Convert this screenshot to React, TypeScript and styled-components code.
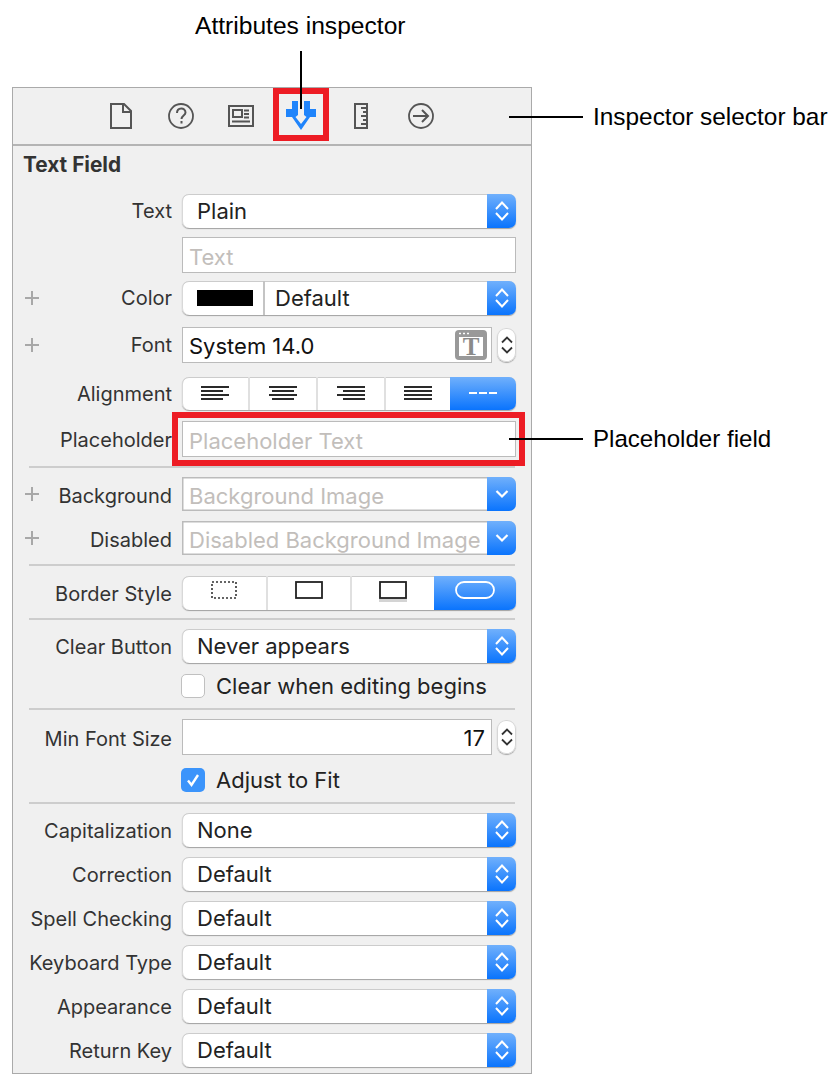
import React from 'react'
import styled, { createGlobalStyle } from 'styled-components'

const GlobalStyle = createGlobalStyle`
  html, body {
    margin: 0;
    padding: 0;
    background: #fff;
  }
`

const Page = styled.div`
  position: relative;
  width: 839px;
  height: 1085px;
  overflow: hidden;
  background: #fff;
  font-family: Inter, 'Liberation Sans', sans-serif;
`

const TopCaption = styled.div`
  height: 87px;
  box-sizing: border-box;
  padding: 12px 0 0 195px;
  font-family: 'Liberation Sans', Arial, sans-serif;
  font-size: 24.6px;
  line-height: 28px;
  color: #000;
`

const SideCaption = styled.div<{ $top: number; $size: number }>`
  position: absolute;
  left: 593px;
  top: ${p => p.$top}px;
  font-family: 'Liberation Sans', Arial, sans-serif;
  font-size: ${p => p.$size}px;
  line-height: 28px;
  color: #000;
  white-space: nowrap;
`

const VerticalLeader = styled.div`
  position: absolute;
  left: 300px;
  top: 51px;
  width: 2px;
  height: 58px;
  background: #000;
  z-index: 3;
`

const SideLeader = styled.div<{ $top: number }>`
  position: absolute;
  left: 509px;
  top: ${p => p.$top}px;
  width: 74px;
  height: 2px;
  background: #000;
  z-index: 3;
`

const Highlight = styled.div<{ $x: number; $y: number; $w: number; $h: number }>`
  position: absolute;
  left: ${p => p.$x}px;
  top: ${p => p.$y}px;
  width: ${p => p.$w}px;
  height: ${p => p.$h}px;
  box-sizing: border-box;
  border: 6px solid #ed1c24;
  z-index: 2;
`

const Panel = styled.div`
  box-sizing: border-box;
  width: 520px;
  height: 987px;
  margin-left: 12px;
  border: 1px solid #aaa;
  background: #f0f0f0;
`

const SelectorBar = styled.div`
  display: flex;
  justify-content: center;
  align-items: center;
  height: 58px;
  box-sizing: border-box;
  padding-right: 2px;
  border-bottom: 2px solid #b4b4b4;
`

const SelectorCell = styled.div`
  display: flex;
  justify-content: center;
  align-items: center;
  width: 60px;
`

const Body = styled.div`
  display: flex;
  flex-direction: column;
`

const Heading = styled.div`
  margin: 7px 0 0 10px;
  height: 24px;
  font-size: 20.8px;
  line-height: 24px;
  font-weight: 700;
  color: #333;
`

const Row = styled.div<{ $top: number }>`
  display: flex;
  align-items: center;
  margin-top: ${p => p.$top}px;
  padding: 0 15px 0 12px;
`

const PlusMark = styled.span`
  position: relative;
  flex: none;
  width: 14px;
  height: 14px;

  &::before,
  &::after {
    content: '';
    position: absolute;
    background: #a8a8a8;
  }
  &::before {
    left: 0;
    right: 0;
    top: 6px;
    height: 2px;
  }
  &::after {
    top: 0;
    bottom: 0;
    left: 6px;
    width: 2px;
  }
`

const Label = styled.div<{ $drop?: number }>`
  flex: 1;
  min-width: 0;
  margin-right: 10px;
  padding-top: ${p => p.$drop ?? 0}px;
  font-size: 20px;
  line-height: 24px;
  text-align: right;
  white-space: nowrap;
  color: #333;
`

const Control = styled.div`
  flex: none;
  width: 334px;
`

const SelectBox = styled.div`
  display: flex;
  height: 34px;
  box-sizing: border-box;
  overflow: hidden;
  border-radius: 7px;
  background: #fff;
  box-shadow: inset 0 1px 0 #ccc, inset 1px 0 0 #d8d8d8, 0 1px 1px #a0a0a0;
`

const DisabledSelect = styled(SelectBox)`
  border-radius: 0 7px 7px 0;
  box-shadow: inset 0 0 0 1.5px #bbb;
`

const ValueText = styled.div<{ $muted?: boolean; $left?: number }>`
  flex: 1;
  min-width: 0;
  padding-left: ${p => p.$left ?? 15}px;
  padding-top: ${p => (p.$muted ? 2 : 0)}px;
  font-size: 22px;
  line-height: 34px;
  white-space: nowrap;
  overflow: hidden;
  color: ${p => (p.$muted ? '#c2bebb' : '#222')};
`

const BlueCap = styled.div`
  display: flex;
  flex: none;
  justify-content: center;
  align-items: center;
  width: 29px;
  background: linear-gradient(#70b0fc, #0a74fd);
`

const SwatchCell = styled.div`
  display: flex;
  flex: none;
  justify-content: center;
  align-items: center;
  width: 77px;
  padding-left: 4px;
  border-right: 2px solid #c4c4c4;
`

const Swatch = styled.div`
  width: 56px;
  height: 16px;
  background: #000;
`

const FieldBox = styled.div`
  display: flex;
  flex: 1;
  align-items: center;
  height: 36px;
  box-sizing: border-box;
  border: 1.5px solid #bbb;
  background: #fff;
`

const FieldText = styled.div<{ $muted?: boolean; $right?: boolean }>`
  flex: 1;
  padding: ${p => (p.$muted ? 3 : 1)}px 6px 0;
  font-size: 22px;
  line-height: 30px;
  white-space: nowrap;
  text-align: ${p => (p.$right ? 'right' : 'left')};
  color: ${p => (p.$muted ? '#c2bebb' : '#111')};
`

const FieldWithStepper = styled.div`
  display: flex;
  align-items: center;
  gap: 5px;
`

const StepperBox = styled.div`
  display: flex;
  flex: none;
  justify-content: center;
  align-items: center;
  width: 19px;
  height: 34px;
  border-radius: 9px;
  background: #fff;
  box-shadow: inset 0 0 0 1px #d6d6d6, 0 1px 1px #aaa;
`

const FontIcon = styled.div`
  display: flex;
  flex: none;
  margin-right: 4px;
`

const Segmented = styled.div<{ $columns: string; $height: number }>`
  display: grid;
  grid-template-columns: ${p => p.$columns};
  height: ${p => p.$height}px;
  overflow: hidden;
  border-radius: 7px;
  background: #fff;
  box-shadow: inset 0 1px 0 #ccc, inset 1px 0 0 #d8d8d8, 0 1px 1px #a0a0a0;
`

const Segment = styled.div<{ $active?: boolean; $offset: number }>`
  display: flex;
  justify-content: center;
  align-items: flex-start;
  padding-top: ${p => p.$offset}px;
  background: ${p => (p.$active ? 'linear-gradient(#70b0fc, #0a74fd)' : 'transparent')};
  border-right: 2px solid ${p => (p.$active ? 'transparent' : '#e0e0e0')};

  &:nth-last-child(2),
  &:last-child {
    border-right: none;
  }
`

const CheckRow = styled.div<{ $top: number }>`
  display: flex;
  align-items: center;
  gap: 11px;
  margin: ${p => p.$top}px 0 0 168px;
  height: 24px;
  font-size: 22px;
  line-height: 24px;
  color: #222;
`

const CheckBox = styled.div<{ $checked?: boolean }>`
  display: flex;
  justify-content: center;
  align-items: center;
  width: 24px;
  height: 24px;
  box-sizing: border-box;
  border-radius: 5px;
  background: ${p => (p.$checked ? '#3b94fb' : '#fff')};
  border: ${p => (p.$checked ? 'none' : '1.5px solid #c0c0c0')};
`

const Divider = styled.div<{ $top: number }>`
  height: 2px;
  margin: ${p => p.$top}px 16px 0;
  background: #cdcdcd;
`

const Chevrons = () => (
  <svg width="14" height="24" viewBox="0 0 14 24" fill="none" stroke="#fff" strokeWidth="2">
    <path d="M1 10 7 3.500l6 6.500M1 14l6 6.500 6-6.500" />
  </svg>
)

const StepperChevrons = () => (
  <svg width="12" height="24" viewBox="0 0 12 24" fill="none" stroke="#333" strokeWidth="1.8">
    <path d="M1 9.500 6 4.500l5 5M1 14.500l5 5 5-5" />
  </svg>
)

const ChevronDown = () => (
  <svg width="14" height="24" viewBox="0 0 14 24" fill="none" stroke="#fff" strokeWidth="2.2">
    <path d="M1.500 9 7 14.500 12.500 9" />
  </svg>
)

const Select = ({ value }: { value: string }) => (
  <SelectBox>
    <ValueText>{value}</ValueText>
    <BlueCap>
      <Chevrons />
    </BlueCap>
  </SelectBox>
)

const Stepper = () => (
  <StepperBox>
    <StepperChevrons />
  </StepperBox>
)

const selectorStroke = '#555'

const DocIcon = () => (
  <svg width="24" height="28" viewBox="0 0 24 28" fill="none" stroke={selectorStroke} strokeWidth="2">
    <path d="M2 2h13l7 7v17H2zM14 2v8h8" />
  </svg>
)

const HelpIcon = () => (
  <svg width="28" height="28" viewBox="0 0 28 28" fill="none" stroke={selectorStroke} strokeWidth="1.8">
    <circle cx="14" cy="14" r="12" />
    <path d="M10 11c0-6 8.500-6 8.500-.5 0 3-4 3-4 6.500" strokeWidth="2" />
    <path d="M14.500 19v2.500" strokeWidth="2" />
  </svg>
)

const IdentityIcon = () => (
  <svg width="26" height="22" viewBox="0 0 26 22" fill="none" stroke={selectorStroke} strokeWidth="2">
    <path d="M1 1h24v20H1z" />
    <path d="M5 5h9v7H5z" />
    <path d="M16 5.500h5M16 9h5M16 12.500h5M4 16.500h18" />
  </svg>
)

const AttributesIcon = () => (
  <svg width="30" height="30" viewBox="0 0 30 30">
    <path
      fill="#1f84fb"
      d="M6 0h6v14l-2.500 2L15 23l5.500-7-2.500-2V0h6v8h6v8h-6L15 29 6 16H0V8h6z"
    />
  </svg>
)

const RulerIcon = () => (
  <svg width="14" height="26" viewBox="0 0 14 26" fill="none" stroke={selectorStroke} strokeWidth="2">
    <path d="M1 1h12v24H1z" />
    <path d="M7 5h6M9 9h4M7 13h6M9 17h4M7 21h6" />
  </svg>
)

const ConnectionsIcon = () => (
  <svg width="28" height="28" viewBox="0 0 28 28" fill="none" stroke={selectorStroke} strokeWidth="1.8">
    <circle cx="14" cy="14" r="12" />
    <path d="M6 14h15M15 8l6 6-6 6" strokeWidth="2" />
  </svg>
)

const TextStyleIcon = () => (
  <svg width="32" height="30" viewBox="0 0 32 30">
    <rect x="0" y="0" width="32" height="30" rx="4" fill="#999" />
    <rect x="4" y="7" width="24" height="19" fill="#fff" />
    <path d="M4 3.500h2M8 3.500h2M12 3.500h2" stroke="#fff" strokeWidth="1.6" />
    <text
      x="16"
      y="25"
      textAnchor="middle"
      fontFamily="'Liberation Serif', serif"
      fontWeight="700"
      fontSize="25"
      fill="#8a8a8a"
    >
      T
    </text>
  </svg>
)

const AlignIcon = ({ kind }: { kind: 'left' | 'center' | 'right' | 'full' }) => {
  const lines = [28, 22, 28, 22]
  return (
    <svg width="28" height="15" viewBox="0 0 28 15" fill="#2a2a2a">
      {lines.map((w, i) => {
        const width = kind === 'full' ? 28 : w
        const x = kind === 'left' || kind === 'full' ? 0 : kind === 'right' ? 28 - width : (28 - width) / 2
        return <rect key={i} x={x} y={i * 4} width={width} height="2" />
      })}
    </svg>
  )
}

const DashIcon = () => (
  <svg width="28" height="15" viewBox="0 0 28 15" fill="#fff">
    <rect x="0" y="6" width="8" height="2" />
    <rect x="10" y="6" width="8" height="2" />
    <rect x="20" y="6" width="8" height="2" />
  </svg>
)

const BorderNone = () => (
  <svg width="26" height="18" viewBox="0 0 26 18" fill="none" stroke="#333" strokeWidth="1.6" strokeDasharray="2 2">
    <rect x="1" y="1" width="24" height="16" />
  </svg>
)

const BorderLine = () => (
  <svg width="28" height="18" viewBox="0 0 28 18" fill="none" stroke="#222" strokeWidth="1.8">
    <rect x="1" y="1" width="26" height="16" />
  </svg>
)

const BorderBezel = () => (
  <svg width="28" height="21" viewBox="0 0 28 21" fill="none">
    <rect y="3" width="28" height="18" fill="#d4d4d4" />
    <rect x="1" y="1" width="26" height="16" fill="#fff" stroke="#222" strokeWidth="1.8" />
  </svg>
)

const BorderRounded = () => (
  <svg width="40" height="18" viewBox="0 0 40 18" fill="none" stroke="#fff" strokeWidth="1.8">
    <rect x="1" y="1" width="38" height="16" rx="8" />
  </svg>
)

const lowerSelects = [
  { label: 'Correction', value: 'Default' },
  { label: 'Spell Checking', value: 'Default' },
  { label: 'Keyboard Type', value: 'Default' },
  { label: 'Appearance', value: 'Default' },
  { label: 'Return Key', value: 'Default' },
]

export default function App() {
  return (
    <Page>
      <GlobalStyle />
      <TopCaption>Attributes inspector</TopCaption>
      <VerticalLeader />
      <Highlight $x={273} $y={88} $w={56} $h={53} />
      <Highlight $x={172} $y={412} $w={353} $h={54} />
      <SideLeader $top={116} />
      <SideLeader $top={438} />
      <SideCaption $top={103} $size={24.4}>Inspector selector bar</SideCaption>
      <SideCaption $top={425} $size={24.1}>Placeholder field</SideCaption>

      <Panel>
        <SelectorBar>
          <SelectorCell><DocIcon /></SelectorCell>
          <SelectorCell><HelpIcon /></SelectorCell>
          <SelectorCell><IdentityIcon /></SelectorCell>
          <SelectorCell><AttributesIcon /></SelectorCell>
          <SelectorCell><RulerIcon /></SelectorCell>
          <SelectorCell><ConnectionsIcon /></SelectorCell>
        </SelectorBar>

        <Body>
          <Heading>Text Field</Heading>

          <Row $top={17}>
            <Label>Text</Label>
            <Control><Select value="Plain" /></Control>
          </Row>
          <Row $top={9}>
            <Label />
            <Control>
              <FieldBox><FieldText $muted>Text</FieldText></FieldBox>
            </Control>
          </Row>
          <Row $top={8}>
            <PlusMark />
            <Label>Color</Label>
            <Control>
              <SelectBox>
                <SwatchCell><Swatch /></SwatchCell>
                <ValueText $left={10}>Default</ValueText>
                <BlueCap><Chevrons /></BlueCap>
              </SelectBox>
            </Control>
          </Row>
          <Row $top={12}>
            <PlusMark />
            <Label>Font</Label>
            <Control>
              <FieldWithStepper>
                <FieldBox>
                  <FieldText>System 14.0</FieldText>
                  <FontIcon><TextStyleIcon /></FontIcon>
                </FieldBox>
                <Stepper />
              </FieldWithStepper>
            </Control>
          </Row>
          <Row $top={14}>
            <Label>Alignment</Label>
            <Control>
              <Segmented $columns="68px 68px 68px 64px 66px" $height={33}>
                <Segment $offset={9}><AlignIcon kind="left" /></Segment>
                <Segment $offset={9}><AlignIcon kind="center" /></Segment>
                <Segment $offset={9}><AlignIcon kind="right" /></Segment>
                <Segment $offset={9}><AlignIcon kind="full" /></Segment>
                <Segment $offset={9} $active><DashIcon /></Segment>
              </Segmented>
            </Control>
          </Row>
          <Row $top={11}>
            <Label $drop={2}>Placeholder</Label>
            <Control>
              <FieldBox><FieldText $muted>Placeholder Text</FieldText></FieldBox>
            </Control>
          </Row>

          <Divider $top={9} />

          <Row $top={9}>
            <PlusMark />
            <Label $drop={4}>Background</Label>
            <Control>
              <DisabledSelect>
                <ValueText $muted $left={7}>Background Image</ValueText>
                <BlueCap><ChevronDown /></BlueCap>
              </DisabledSelect>
            </Control>
          </Row>
          <Row $top={10}>
            <PlusMark />
            <Label $drop={4}>Disabled</Label>
            <Control>
              <DisabledSelect>
                <ValueText $muted $left={7}>Disabled Background Image</ValueText>
                <BlueCap><ChevronDown /></BlueCap>
              </DisabledSelect>
            </Control>
          </Row>

          <Divider $top={9} />

          <Row $top={10}>
            <Label $drop={2}>Border Style</Label>
            <Control>
              <Segmented $columns="86px 84px 82px 82px" $height={34}>
                <Segment $offset={5}><BorderNone /></Segment>
                <Segment $offset={5}><BorderLine /></Segment>
                <Segment $offset={5}><BorderBezel /></Segment>
                <Segment $offset={5} $active><BorderRounded /></Segment>
              </Segmented>
            </Control>
          </Row>

          <Divider $top={8} />

          <Row $top={9}>
            <Label $drop={2}>Clear Button</Label>
            <Control><Select value="Never appears" /></Control>
          </Row>
          <CheckRow $top={11}>
            <CheckBox />
            Clear when editing begins
          </CheckRow>

          <Divider $top={10} />

          <Row $top={9}>
            <Label $drop={3}>Min Font Size</Label>
            <Control>
              <FieldWithStepper>
                <FieldBox><FieldText $right>17</FieldText></FieldBox>
                <Stepper />
              </FieldWithStepper>
            </Control>
          </Row>
          <CheckRow $top={13}>
            <CheckBox $checked>
              <svg width="16" height="16" viewBox="0 0 16 16" fill="none" stroke="#fff" strokeWidth="2.4">
                <path d="M3 8.500 6.500 13 13 3" />
              </svg>
            </CheckBox>
            Adjust to Fit
          </CheckRow>

          <Divider $top={10} />

          <Row $top={9}>
            <Label $drop={1}>Capitalization</Label>
            <Control><Select value="None" /></Control>
          </Row>
          {lowerSelects.map(row => (
            <Row $top={10} key={row.label}>
              <Label $drop={1}>{row.label}</Label>
              <Control><Select value={row.value} /></Control>
            </Row>
          ))}
        </Body>
      </Panel>
    </Page>
  )
}
